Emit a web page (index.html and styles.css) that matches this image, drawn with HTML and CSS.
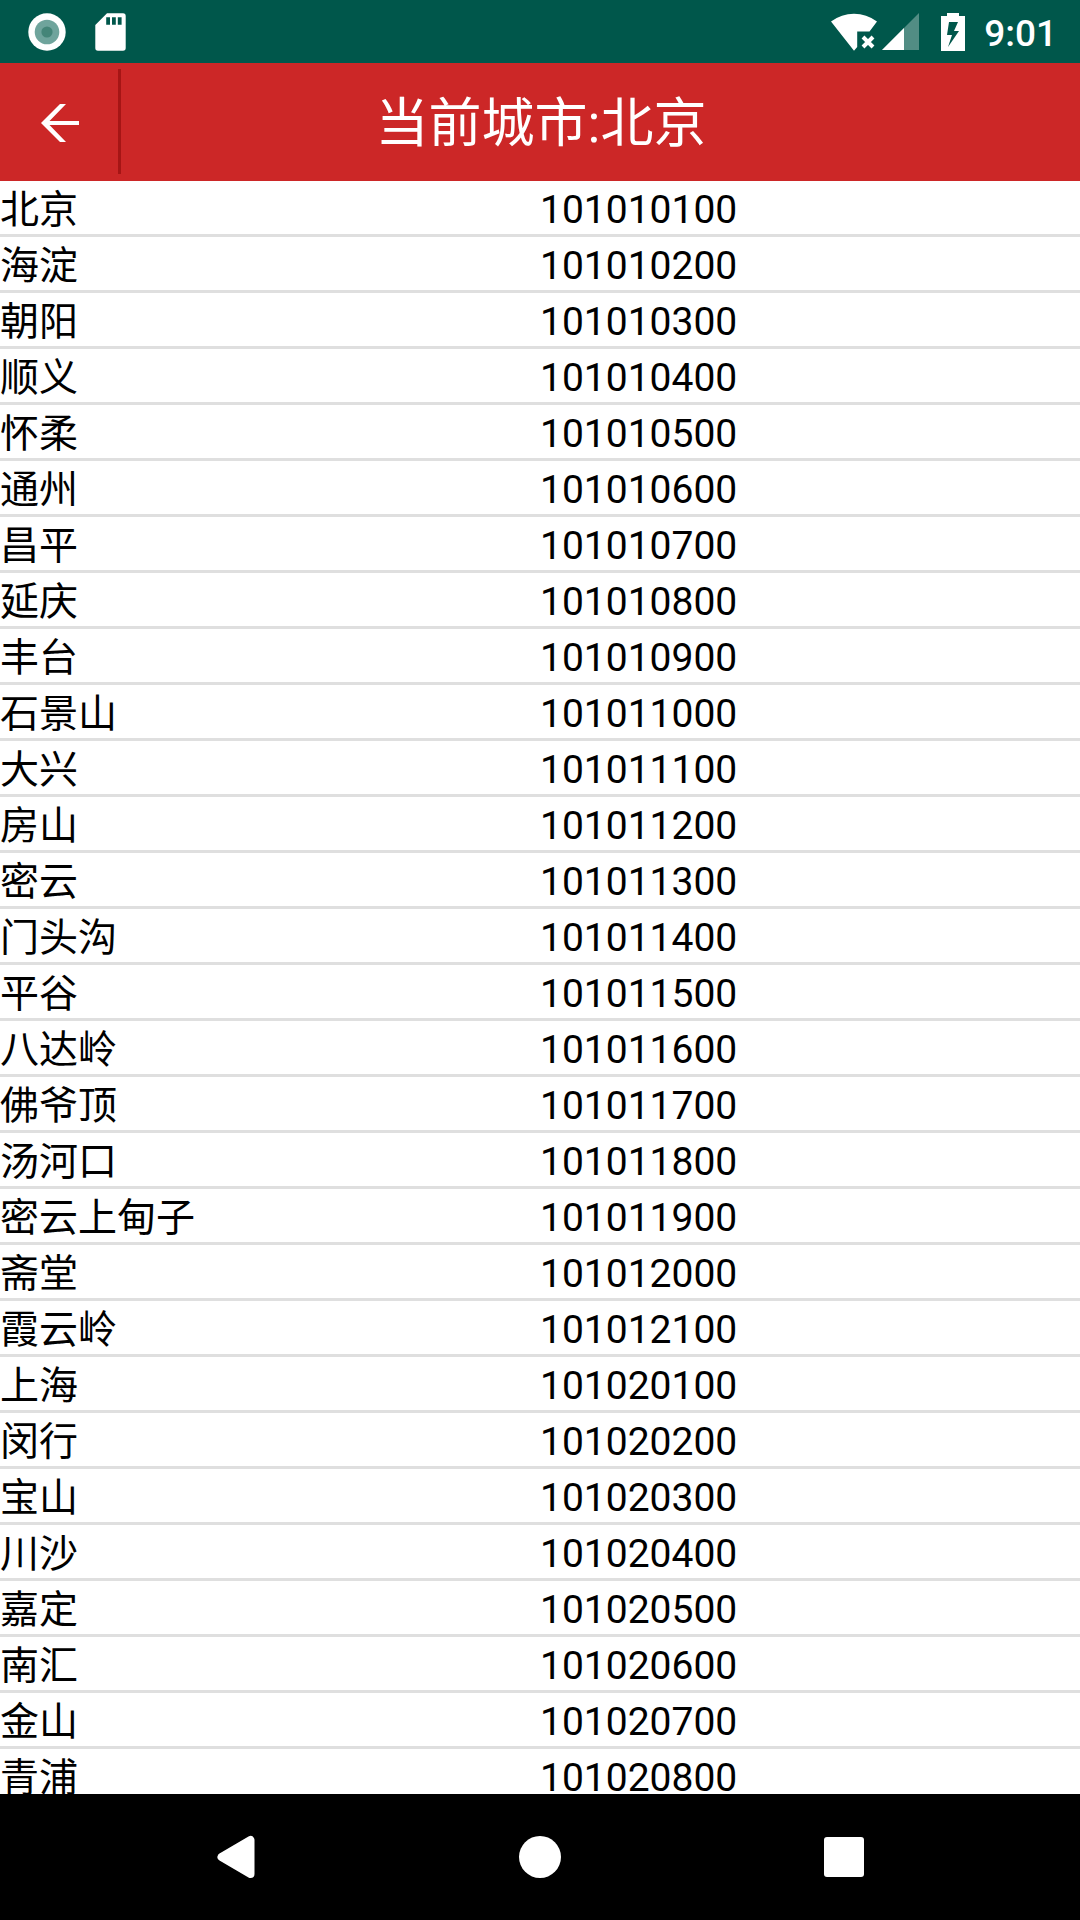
FILE: index.html
```
<!DOCTYPE html>
<html lang="zh-CN">
<head>
<meta charset="utf-8">
<meta name="viewport" content="width=device-width, initial-scale=1">
<title>当前城市:北京</title>
<link rel="stylesheet" href="styles.css">
</head>
<body>
<div class="status-bar">
  <div class="status-group">
    <svg class="icon-record" viewBox="0 0 38 38" aria-hidden="true"><circle cx="19" cy="19" r="18.700" fill="#fff"/><circle cx="19" cy="19" r="12.300" fill="#6fa49c"/><circle cx="19" cy="19" r="5.600" fill="#448578"/></svg>
    <svg class="icon-card" viewBox="0 0 31 38" aria-hidden="true"><path fill="#fff" fill-rule="evenodd" d="M12 .3H28Q30.700 .3 30.700 3V35Q30.700 37.700 28 37.700H3Q.3 37.700 .3 35V12ZM11.200 4.200V11.800H15V4.200ZM17 4.200V11.800H20.800V4.200ZM22.800 4.200V11.800H26.600V4.200Z"/></svg>
  </div>
  <div class="status-group status-group-end">
    <svg class="icon-wifi" viewBox="0 0 47 38" aria-hidden="true"><path fill="#fff" d="M0 8.500Q10.500 .7 23 .7T46 8.500L38.500 18.500H26.200V34L23 37.800Z"/><path stroke="#fff" stroke-width="4" d="M32 24 42 34M42 24 32 34"/></svg>
    <svg class="icon-signal" viewBox="0 0 37 38" aria-hidden="true"><path fill="#fff" fill-opacity=".32" d="M37 0V37H0Z"/><path fill="#fff" d="M22 15V37H0Z"/></svg>
    <svg class="icon-battery" viewBox="0 0 24 38" aria-hidden="true"><path fill="#fff" fill-rule="evenodd" d="M6 0H18V3H24V38H0V3H6ZM8 9 6 22H11L7 34 18 18H13L17 9Z"/></svg>
    <time class="clock">9:01</time>
  </div>
</div>
<header class="title-bar">
  <button class="back-button" type="button" aria-label="返回">
    <svg class="icon-back" viewBox="0 0 38 38" aria-hidden="true"><path fill="#fff" d="M19 0H25L8.500 17H38V21H8.500L25 38H19L0 19Z"/></svg>
  </button>
  <span class="divider"></span>
  <h1 class="title">当前城市:北京</h1>
</header>
<main class="city-list">
  <table class="city-table">
    <tbody>
      <tr><td>北京</td><td>101010100</td></tr>
      <tr><td>海淀</td><td>101010200</td></tr>
      <tr><td>朝阳</td><td>101010300</td></tr>
      <tr><td>顺义</td><td>101010400</td></tr>
      <tr><td>怀柔</td><td>101010500</td></tr>
      <tr><td>通州</td><td>101010600</td></tr>
      <tr><td>昌平</td><td>101010700</td></tr>
      <tr><td>延庆</td><td>101010800</td></tr>
      <tr><td>丰台</td><td>101010900</td></tr>
      <tr><td>石景山</td><td>101011000</td></tr>
      <tr><td>大兴</td><td>101011100</td></tr>
      <tr><td>房山</td><td>101011200</td></tr>
      <tr><td>密云</td><td>101011300</td></tr>
      <tr><td>门头沟</td><td>101011400</td></tr>
      <tr><td>平谷</td><td>101011500</td></tr>
      <tr><td>八达岭</td><td>101011600</td></tr>
      <tr><td>佛爷顶</td><td>101011700</td></tr>
      <tr><td>汤河口</td><td>101011800</td></tr>
      <tr><td>密云上甸子</td><td>101011900</td></tr>
      <tr><td>斋堂</td><td>101012000</td></tr>
      <tr><td>霞云岭</td><td>101012100</td></tr>
      <tr><td>上海</td><td>101020100</td></tr>
      <tr><td>闵行</td><td>101020200</td></tr>
      <tr><td>宝山</td><td>101020300</td></tr>
      <tr><td>川沙</td><td>101020400</td></tr>
      <tr><td>嘉定</td><td>101020500</td></tr>
      <tr><td>南汇</td><td>101020600</td></tr>
      <tr><td>金山</td><td>101020700</td></tr>
      <tr><td>青浦</td><td>101020800</td></tr>
    </tbody>
  </table>
</main>
<nav class="nav-bar">
  <button class="nav-button" type="button" aria-label="返回上一页"><svg class="icon-nav" viewBox="0 0 44 44" aria-hidden="true"><path fill="#fff" stroke="#fff" stroke-width="8" stroke-linejoin="round" d="M36.500 5V39L7.500 22Z"/></svg></button>
  <button class="nav-button" type="button" aria-label="主屏幕"><svg class="icon-nav" viewBox="0 0 44 44" aria-hidden="true"><circle cx="22" cy="22" r="21" fill="#fff"/></svg></button>
  <button class="nav-button" type="button" aria-label="最近任务"><svg class="icon-nav" viewBox="0 0 44 44" aria-hidden="true"><rect x="2" y="2" width="40" height="40" rx="3" fill="#fff"/></svg></button>
</nav>
</body>
</html>
```
FILE: styles.css
```
* {
  box-sizing: border-box;
}

body {
  margin: 0;
  height: 100vh;
  display: flex;
  flex-direction: column;
  background: #fff;
  color: #000;
  font-family: Roboto, "Noto Sans CJK SC", sans-serif;
}

button {
  margin: 0;
  padding: 0;
  border: 0;
  background: none;
  display: flex;
  align-items: center;
  justify-content: center;
}

svg {
  display: block;
}

.status-bar {
  flex: none;
  height: 63px;
  padding: 0 23px 0 28px;
  display: flex;
  align-items: center;
  justify-content: space-between;
  background: #00574b;
}

.status-group {
  display: flex;
  align-items: center;
  gap: 29px;
}

.status-group-end {
  gap: 19px;
}

.icon-record {
  width: 38px;
  height: 38px;
}

.icon-card {
  width: 31px;
  height: 38px;
}

.icon-wifi {
  width: 47px;
  height: 38px;
  margin-right: -15px;
}

.icon-signal {
  width: 37px;
  height: 38px;
  margin-right: 3px;
}

.icon-battery {
  width: 24px;
  height: 38px;
}

.clock {
  color: #fff;
  font-size: 37px;
  font-weight: 500;
  line-height: 59px;
  padding-top: 4px;
}

.title-bar {
  flex: none;
  height: 118px;
  display: grid;
  grid-template-columns: 118px 3px 1fr 119px;
  align-items: center;
  background: #cc2727;
}

.back-button {
  height: 118px;
  padding: 1px 0 0 2px;
}

.icon-back {
  width: 38px;
  height: 38px;
}

.divider {
  height: 105px;
  margin-bottom: 1px;
  background: #a61515;
}

.title {
  margin: 0;
  padding-top: 4px;
  color: #fff;
  font-size: 53px;
  font-weight: 400;
  line-height: 64px;
  text-align: center;
}

.city-list {
  flex: 1;
  min-height: 0;
  overflow: hidden;
}

.city-table {
  width: 100%;
  table-layout: fixed;
  border-collapse: separate;
  border-spacing: 0;
}

.city-table td {
  padding: 6px 0 0;
  border-bottom: 3px solid #dfdfdf;
  font-size: 39px;
  line-height: 47px;
}

.nav-bar {
  flex: none;
  height: 126px;
  padding: 0 84px;
  display: grid;
  grid-template-columns: repeat(3, 1fr);
  background: #000;
}

.icon-nav {
  width: 44px;
  height: 44px;
}
```
